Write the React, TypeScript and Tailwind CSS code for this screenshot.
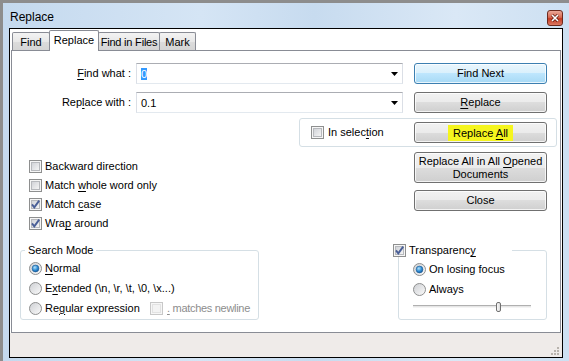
import React, { useId } from 'react';

const U = ({ children }: { children: React.ReactNode }) => (
  <span className="underline decoration-1 underline-offset-[2px]">{children}</span>
);

const uid = () => useId().replace(/[^a-zA-Z0-9]/g, '');

const CheckBox = ({ checked = false, disabled = false }: { checked?: boolean; disabled?: boolean }) => {
  const id = uid();
  return (
    <svg width="13" height="13" viewBox="0 0 13 13" className="shrink-0 block">
      <defs>
        <linearGradient id={`${id}g`} x1="0" y1="0" x2="1" y2="1">
          <stop offset="0" stopColor="#cfd1d6" />
          <stop offset="1" stopColor="#f7f7f7" />
        </linearGradient>
      </defs>
      <rect x="0.5" y="0.5" width="12" height="12" fill="#f6f6f6" stroke={disabled ? '#c8c8c8' : '#8e8f8f'} />
      <rect x="2.5" y="2.5" width="8" height="8" fill={disabled ? '#f3f3f3' : `url(#${id}g)`} stroke={disabled ? '#e2e2e2' : '#b7b9bd'} />
      {checked && <path d="M3 6.3l2.3 3L10.2 2.6" stroke="#4a5f97" strokeWidth="1.9" fill="none" />}
    </svg>
  );
};

const Radio = ({ on = false }: { on?: boolean }) => {
  const id = uid();
  return (
    <svg width="13" height="13" viewBox="0 0 13 13" className="shrink-0 block">
      <defs>
        <linearGradient id={`${id}a`} x1="0" y1="0" x2="1" y2="1">
          <stop offset="0" stopColor="#cdcfd3" />
          <stop offset="1" stopColor="#fbfbfb" />
        </linearGradient>
        <radialGradient id={`${id}b`} cx="0.4" cy="0.35" r="0.75">
          <stop offset="0" stopColor="#b4e2fa" />
          <stop offset="0.55" stopColor="#2c8ad2" />
          <stop offset="1" stopColor="#134f93" />
        </radialGradient>
      </defs>
      <circle cx="6.5" cy="6.5" r="6" fill={`url(#${id}a)`} stroke="#8e8f8f" />
      {on && <circle cx="6.5" cy="6.5" r="3.4" fill={`url(#${id}b)`} stroke="#1c5a93" strokeWidth="0.6" />}
    </svg>
  );
};

const Btn = ({ children, def = false, className = '' }: { children: React.ReactNode; def?: boolean; className?: string }) => (
  <div
    className={`flex items-center justify-center rounded-[3px] border text-center leading-[13px] shadow-[inset_0_0_0_1px_rgba(255,255,255,0.75)] ${
      def
        ? 'border-[#3c7fb1] bg-[linear-gradient(#eaf6fd_0%,#d9f0fc_50%,#bee6fd_50%,#a7d9f5_100%)]'
        : 'border-[#707070] bg-[linear-gradient(#f2f2f2_0%,#ebebeb_50%,#dddddd_50%,#cfcfcf_100%)]'
    } ${className}`}
  >
    {children}
  </div>
);

const Combo = ({ children }: { children: React.ReactNode }) => (
  <div className="ml-[5px] w-[267px] h-[21px] border border-[#abadb3] border-x-[#dbdfe6] border-b-[#e3e9ef] bg-white flex items-center pl-[4px] pr-[4px]">
    <div className="flex-1 leading-[14px]">{children}</div>
    <svg width="7" height="4" viewBox="0 0 7 4" className="block">
      <path d="M0 0h7L3.5 4z" fill="#000" />
    </svg>
  </div>
);

const Tab = ({ label, active = false, w }: { label: string; active?: boolean; w: string }) => (
  <div
    className={`${w} flex items-center justify-center whitespace-nowrap border border-b-0 border-[#898c95] rounded-t-[2px] ${
      active
        ? 'h-[21px] -mb-px bg-white relative z-10 pb-[2px]'
        : 'h-[18px] pt-[1px] bg-[linear-gradient(#f3f3f3,#e8e8e8_50%,#dcdcdc_50%,#d5d5d5)] -ml-px first:ml-0'
    }`}
  >
    {label}
  </div>
);

export default function App() {
  return (
    <div className="w-[569px] h-[361px] overflow-hidden bg-[#8d8d8d] pt-[3px] pl-[3px] text-[11px] text-black font-['Liberation_Sans',Arial,sans-serif]">
      <div className="w-[566px] h-[358px] flex flex-col bg-[linear-gradient(90deg,#c4d9ee,#d5e5f5_35%,#c7dbef_55%,#dae8f6_80%,#cde0f2)]">
        {/* title bar */}
        <div className="h-[25px] flex items-start justify-between pl-[7px] pr-[6px]">
          <span className="mt-[7px] text-[12px] leading-[14px]">Replace</span>
          <div className="mt-[7px] w-[16px] h-[16px] rounded-[3px] border border-[#6e2a1e] bg-[linear-gradient(#eaa898,#d86a52_45%,#c4381f_55%,#dc7a63)] flex items-center justify-center">
            <svg width="8" height="8" viewBox="0 0 8 8">
              <path d="M1 1l6 6M7 1L1 7" stroke="#5a1a10" strokeWidth="3" />
              <path d="M1 1l6 6M7 1L1 7" stroke="#fff" strokeWidth="1.6" />
            </svg>
          </div>
        </div>

        {/* client */}
        <div className="ml-[6px] w-[554px] h-[330px] border border-black bg-white flex flex-col">
          <div className="h-[21px] pl-[2px] flex items-end">
            <Tab label="Find" w="w-[38px]" />
            <Tab label="Replace" active w="w-[50px] -ml-px" />
            <Tab label="Find in Files" w="w-[62px] tracking-[-0.2px]" />
            <Tab label="Mark" w="w-[37px]" />
          </div>

          <div className="ml-px w-[550px] h-[283px] border border-[#898c95] flex flex-col">
            {/* find / replace rows */}
            <div className="flex items-center mt-[12px]">
              <div className="w-[119px] text-right">
                <U>F</U>ind what :
              </div>
              <Combo>
                <span className="bg-[#3399ff] text-white">0</span>
              </Combo>
              <Btn def className="ml-[11px] w-[133px] h-[21px]">
                Find Next
              </Btn>
            </div>
            <div className="flex items-center mt-[8px]">
              <div className="w-[119px] text-right">
                Rep<U>l</U>ace with :
              </div>
              <Combo>0.1</Combo>
              <Btn className="ml-[11px] w-[133px] h-[21px]">
                <U>R</U>eplace
              </Btn>
            </div>
            <div className="mt-[5px] ml-[287px] w-[258px] h-[29px] border border-[#d5dfe5] rounded-[3px] flex items-center">
              <div className="ml-[11px] w-[103px] flex items-center gap-[4px]">
                <CheckBox />
                <span>
                  In selec<U>t</U>ion
                </span>
              </div>
              <Btn className="w-[133px] h-[21px]">
                <span className="bg-[#f5f51e] px-[5px] leading-[16px]">
                  Replace <U>A</U>ll
                </span>
              </Btn>
            </div>

            {/* lower part */}
            <div className="flex">
              <div className="w-[381px] flex flex-col">
                <div className="mt-[10px] ml-[17px] flex flex-col">
                  <div className="h-[19px] flex items-center gap-[3px]">
                    <CheckBox />
                    <span>Backward direction</span>
                  </div>
                  <div className="h-[19px] flex items-center gap-[3px]">
                    <CheckBox />
                    <span>
                      Match <U>w</U>hole word only
                    </span>
                  </div>
                  <div className="h-[19px] flex items-center gap-[3px]">
                    <CheckBox checked />
                    <span>
                      Match <U>c</U>ase
                    </span>
                  </div>
                  <div className="h-[19px] flex items-center gap-[3px]">
                    <CheckBox checked />
                    <span>
                      Wra<U>p</U> around
                    </span>
                  </div>
                </div>

                <fieldset className="ml-[8px] mt-[10px] w-[239px] h-[77px] border border-[#d5dfe5] rounded-[3px]">
                  <legend className="ml-[4px] px-[3px] leading-[14px]">Search Mode</legend>
                  <div className="ml-[8px] mt-[1px] flex flex-col">
                    <div className="h-[20px] flex items-center gap-[3px]">
                      <Radio on />
                      <span>
                        <U>N</U>ormal
                      </span>
                    </div>
                    <div className="h-[20px] flex items-center gap-[3px]">
                      <Radio />
                      <span>
                        E<U>x</U>tended (\n, \r, \t, \0, \x...)
                      </span>
                    </div>
                    <div className="h-[20px] flex items-center">
                      <Radio />
                      <span className="ml-[3px] w-[105px]">
                        Re<U>g</U>ular expression
                      </span>
                      <CheckBox disabled />
                      <span className="ml-[4px] text-[#8d8d8d] tracking-[-0.3px]">
                        <U>.</U> matches newline
                      </span>
                    </div>
                  </div>
                </fieldset>
              </div>

              <div className="flex-1 flex flex-col">
                <Btn className="ml-[21px] mt-[5px] w-[133px] h-[31px] flex-col">
                  <span>
                    Replace All in All <U>O</U>pened
                  </span>
                  <span>Documents</span>
                </Btn>
                <Btn className="ml-[21px] mt-[7px] w-[133px] h-[21px]">Close</Btn>

                <fieldset className="ml-[5px] mt-[32px] w-[149px] h-[77px] border border-[#d5dfe5] rounded-[3px]">
                  <legend className="-ml-[6px] w-[119px] bg-white flex items-center gap-[3px] leading-[14px]">
                    <CheckBox checked />
                    <span>
                      Transparenc<U>y</U>
                    </span>
                  </legend>
                  <div className="ml-[14px] mt-[2px] flex flex-col">
                    <div className="h-[20px] flex items-center gap-[3px]">
                      <Radio on />
                      <span>On losing focus</span>
                    </div>
                    <div className="h-[20px] flex items-center gap-[3px]">
                      <Radio />
                      <span>Always</span>
                    </div>
                    <div className="relative w-[118px] h-[12px] mt-[1px] flex items-center">
                      <div className="w-full h-[3px] border-t border-[#b0b0b0] border-b border-b-[#f4f4f4] bg-[#e6e6e6]" />
                      <div className="absolute left-[83px] top-[2px] w-[5px] h-[10px] rounded-[2px] border border-[#707070] bg-[linear-gradient(90deg,#fafafa,#dcdcdc)]" />
                    </div>
                  </div>
                </fieldset>
              </div>
            </div>
          </div>

          {/* status bar */}
          <div className="flex-1 bg-[#efebe9] flex items-end justify-end pr-[3px] pb-[2px]">
            <svg width="9" height="9" viewBox="0 0 9 9" className="block">
              <g fill="#b8b3ad">
                <rect x="7" y="1" width="2" height="2" />
                <rect x="4" y="4" width="2" height="2" />
                <rect x="7" y="4" width="2" height="2" />
                <rect x="1" y="7" width="2" height="2" />
                <rect x="4" y="7" width="2" height="2" />
                <rect x="7" y="7" width="2" height="2" />
              </g>
            </svg>
          </div>
        </div>
      </div>
    </div>
  );
}
